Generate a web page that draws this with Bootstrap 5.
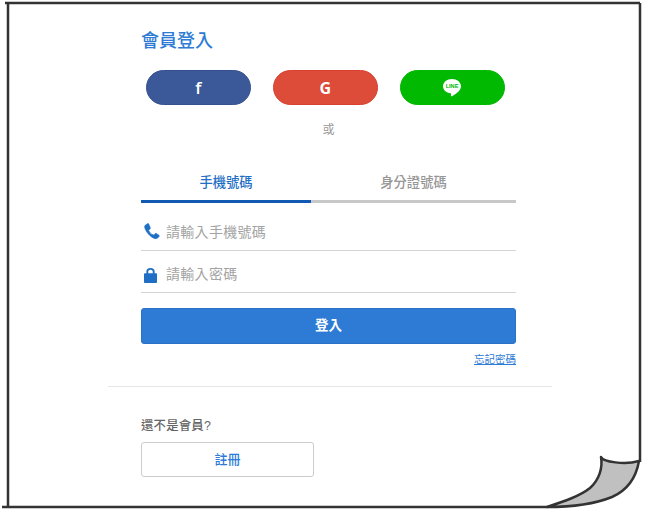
<!DOCTYPE html>
<html lang="zh-Hant">
<head>
  <meta charset="UTF-8">
  <meta name="viewport" content="width=device-width, initial-scale=1">
  <title>會員登入</title>
  <link href="https://cdn.jsdelivr.net/npm/bootstrap@5.3.3/dist/css/bootstrap.min.css" rel="stylesheet">
  <style>
    html, body { height: 100%; }
    body { background: #fff; font-family: "Liberation Sans", "Noto Sans CJK TC", sans-serif; overflow: hidden; }
    .page-frame { position: absolute; left: 0; top: 0; width: 645px; height: 511px; pointer-events: none; }
    .login-wrap { width: 444px; margin-left: 108px; }
    .login-inner { width: 375px; margin-left: 33px; }
    .login-title { font-size: 18px; line-height: 24px; font-weight: 500; color: #2d7bd4; padding-top: 29px; margin: 0 0 17px; }
    .social-row { padding-left: 5px; gap: 22.5px; }
    .social-btn { flex: 0 0 104.5px; height: 35px; border-radius: 18px; color: #fff; padding: 0; border: 1px solid transparent; }
    .social-fb { background: #3b5998; border-color: #35508f; }
    .social-g { background: #dd4b39; border-color: #d8402f; }
    .social-line { background: #00b900; border-color: #00b900; }
    .glyph-f { font: 600 17px/1 "Open Sans", sans-serif; }
    .glyph-g { font: 700 16px/1 "Open Sans", sans-serif; }
    .or-text { font-size: 12px; line-height: 16px; color: #999; margin: 17px 0 0; }
    .tab-row { margin-top: 32px; }
    .tab-item { height: 33px; padding-top: 1px; font-size: 13.3px; font-weight: 500; line-height: 24px; text-align: center; border-bottom: 3px solid #c8c8c8; color: #969696; }
    .tab-phone { flex: 0 0 170px; border-bottom-color: #1259b4; color: #1f6fc5; }
    .tab-id { flex: 1 1 auto; }
    .field-row { height: 42px; border-bottom: 1px solid #d4d4d4; padding: 0 0 8px 3px; gap: 6px; }
    .field-row.first { height: 48px; }
    .field-row input { border: 0; outline: 0; flex: 1; min-width: 0; font-size: 14px; line-height: 20px; height: 20px; padding: 0; background: transparent; letter-spacing: .3px; }
    .field-row input::placeholder { color: #a3a3a3; opacity: 1; }
    .icon-phone { margin-bottom: 3px; }
    .icon-lock { margin: 0 3px 0 0; position: relative; top: -1px; }
    .submit-btn { height: 36px; margin-top: 15px; font-size: 13.5px; font-weight: 700; line-height: 1; background: #2d7bd4; border-color: #2a72c8; border-radius: 3px; }
    .forgot { font-size: 10.5px; line-height: 14px; color: #2d7bd4; margin-top: 8px; }
    .split { margin: 20px 0 0; border-top: 1px solid #e6e6e6; opacity: 1; }
    .ask { font-size: 12.4px; line-height: 16px; font-weight: 500; color: #666; margin: 31px 0 8px; letter-spacing: .2px; }
    .reg-btn { width: 173px; height: 35px; font-size: 13px; font-weight: 500; color: #2d7bd4; border: 1px solid #ccc; border-radius: 3px; background: #fff; padding: 0; }
  </style>
</head>
<body>
  <div class="login-wrap">
    <div class="login-inner">
      <h1 class="login-title">會員登入</h1>

      <div class="d-flex social-row">
        <button type="button" class="btn social-btn social-fb d-flex align-items-center justify-content-center"><span class="glyph-f">f</span></button>
        <button type="button" class="btn social-btn social-g d-flex align-items-center justify-content-center"><span class="glyph-g">G</span></button>
        <button type="button" class="btn social-btn social-line d-flex align-items-center justify-content-center" aria-label="LINE">
          <svg width="18" height="18" viewBox="0 0 18 18">
            <path fill="#fff" d="M9 0C4 0 0 3.200 0 7.200c0 3.600 3.200 6.500 7.500 7.100.5.100.6.400.5.800l-.1 1.600c0 .6.400.8.900.5C11.500 16 18 12 18 7.200 18 3.200 14 0 9 0z"/>
            <text x="9" y="9.200" text-anchor="middle" font-family="Liberation Sans, sans-serif" font-size="5.600" font-weight="700" fill="#00b900">LINE</text>
          </svg>
        </button>
      </div>

      <p class="or-text text-center">或</p>

      <div class="d-flex tab-row">
        <div class="tab-item tab-phone">手機號碼</div>
        <div class="tab-item tab-id">身分證號碼</div>
      </div>

      <form>
        <div class="field-row first d-flex align-items-end">
          <svg class="icon-phone" width="16" height="16" viewBox="0 0 16 16"><path fill="#1f6fc5" stroke="#1f6fc5" stroke-width=".6" d="M3.700.6 1.500 2C.7 2.600.5 3.600.8 4.800c.9 3.800 5.600 9.300 9.500 10.600 1.400.5 2.600.3 3.400-.5l1.400-1.500c.3-.4.3-.8-.1-1.100l-2.700-1.800c-.4-.2-.8-.2-1.100.1l-1 1.100c-.3.3-.6.3-1 .1C7.400 11.700 5.500 9.400 4.800 7.700c-.2-.4-.1-.7.200-1l1-.8c.4-.3.5-.7.300-1.100L4.700.9C4.400.5 4 .4 3.700.6z"/></svg>
          <input type="text" placeholder="請輸入手機號碼">
        </div>
        <div class="field-row d-flex align-items-end">
          <svg class="icon-lock" width="13" height="15" viewBox="2.500 1.500 11 14.500" preserveAspectRatio="none"><path fill="#1f6fc5" d="M4.500 6.500V5a3.500 3.500 0 0 1 7 0v1.500h1c.6 0 1 .4 1 1V15c0 .6-.4 1-1 1h-9c-.6 0-1-.4-1-1V7.500c0-.6.4-1 1-1h1zm1.600 0h3.800V5a1.900 1.900 0 0 0-3.800 0v1.500z"/></svg>
          <input type="password" placeholder="請輸入密碼">
        </div>
        <button type="button" class="btn btn-primary submit-btn w-100 d-block">登入</button>
      </form>

      <div class="text-end forgot"><a href="#" class="forgot">忘記密碼</a></div>
    </div>

    <hr class="split">

    <div class="login-inner">
      <p class="ask">還不是會員?</p>
      <button type="button" class="btn reg-btn">註冊</button>
    </div>
  </div>

  <svg class="page-frame" viewBox="0 0 645 511" fill="none" stroke="#333" stroke-width="2.500">
    <path d="M5 3H640"/>
    <path d="M8 3V507"/>
    <path d="M2 507H548"/>
    <path d="M640 3V462"/>
    <path fill="#c0c0c0" stroke-linejoin="round" d="M601 457C603 462 625 465 639 461C636 478 628 490 612 497C592 505 570 507 547 507C565 501 580 496 590 488C599 480 603 468 601 457Z"/>
  </svg>

  <script src="https://cdn.jsdelivr.net/npm/bootstrap@5.3.3/dist/js/bootstrap.bundle.min.js"></script>
</body>
</html>
